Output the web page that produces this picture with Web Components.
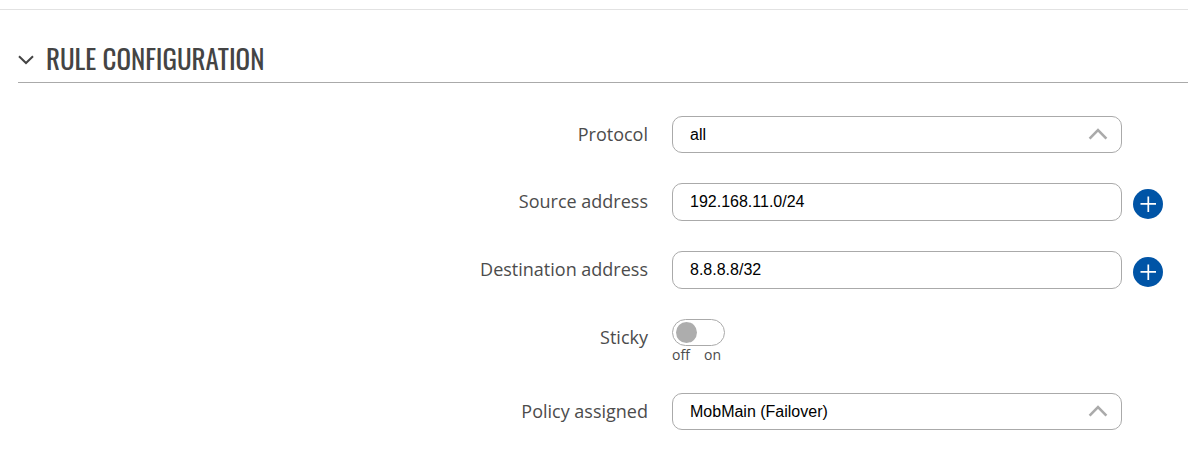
<!DOCTYPE html>
<html lang="en">
<head>
<meta charset="utf-8">
<meta name="viewport" content="width=device-width">
<title>Rule configuration</title>
<style>
  body { margin: 0; background: #fff; color: #4c4c4c; font-family: "Open Sans", sans-serif; font-size: 18px; }
</style>
</head>
<body>
<rule-page>
  <config-section heading="RULE CONFIGURATION">
    <select-field label="Protocol" value="all"></select-field>
    <text-field label="Source address" value="192.168.11.0/24"></text-field>
    <text-field label="Destination address" value="8.8.8.8/32"></text-field>
    <switch-field label="Sticky"></switch-field>
    <select-field label="Policy assigned" value="MobMain (Failover)"></select-field>
  </config-section>
</rule-page>
<script>
class RulePage extends HTMLElement {
  connectedCallback() {
    this.attachShadow({ mode: 'open' }).innerHTML = `
      <style>
        :host { display: block; padding-top: 9px; }
        main { border-top: 1px solid #e2e2e2; padding: 30px 0 32px 18px; }
      </style>
      <main><slot></slot></main>`;
  }
}

class ConfigSection extends HTMLElement {
  connectedCallback() {
    this.attachShadow({ mode: 'open' }).innerHTML = `
      <style>
        :host { display: block; }
        header { display: flex; align-items: center; gap: 12px; box-sizing: border-box; height: 43px; padding-bottom: 6px; border-bottom: 1px solid #aaa; }
        button { display: flex; padding: 4px 0 0; border: 0; background: none; color: #444; }
        h2 { margin: 0; color: #444; font: 400 27px/36px Oswald, "Liberation Sans Narrow", sans-serif; white-space: nowrap; }
        .rows { display: flex; flex-direction: column; gap: 30px; padding-top: 33px; }
      </style>
      <section>
        <header>
          <button type="button" aria-label="Collapse section" aria-expanded="true">
            <svg width="16" height="10" viewBox="0 0 16 10" fill="none" stroke="currentColor" stroke-width="2"><path d="M1 1.2 8 8 15 1.2"/></svg>
          </button>
          <h2></h2>
        </header>
        <div class="rows"><slot></slot></div>
      </section>`;
    this.shadowRoot.querySelector('h2').textContent = this.getAttribute('heading');
  }
}

class FormField extends HTMLElement {
  connectedCallback() {
    this.attachShadow({ mode: 'open' }).innerHTML = `
      <style>
        :host { display: grid; grid-template-columns: 105fr 86fr; column-gap: 24px; align-items: start; }
        .label { text-align: right; line-height: 36px; }
        .control { display: grid; grid-template-columns: 1fr 30px; column-gap: 11px; align-items: start; padding-right: 25px; }
        input[type=text], select {
          box-sizing: border-box; display: block; width: 100%; margin: 0; padding: 0 17px;
          border: 1px solid #aaa; border-radius: 10px; background: #fff; color: #000;
          font: 16px/20px "Liberation Sans", Arial, sans-serif;
        }
      </style>
      <label class="label" for="control"></label>
      <div class="control">${this.control()}</div>`;
    this.shadowRoot.querySelector('label').textContent = this.getAttribute('label');
    this.fill(this.shadowRoot.getElementById('control'));
  }
  fill() {}
}

class TextField extends FormField {
  control() {
    return `
      <style>
        input[type=text] { height: 38px; padding-bottom: 1px; }
        button { display: flex; margin-top: 6px; padding: 0; border: 0; border-radius: 50%; background: none; }
      </style>
      <input type="text" id="control">
      <button type="button" aria-label="Add">
        <svg width="30" height="30" viewBox="0 0 30 30"><circle cx="15" cy="15" r="15" fill="#0054a6"/><path d="M15.3 7.5v15.5M7.5 14.8h15.5" stroke="#fff" stroke-width="1.7"/></svg>
      </button>`;
  }
  fill(input) { input.value = this.getAttribute('value'); }
}

class SelectField extends FormField {
  control() {
    return `
      <style>
        .box { display: grid; align-items: center; }
        .box > * { grid-area: 1 / 1; }
        select { appearance: none; height: 37px; }
        svg { justify-self: end; margin-right: 14px; pointer-events: none; }
      </style>
      <div class="box">
        <select id="control"></select>
        <svg width="20" height="13" viewBox="0 0 20 13" fill="none" stroke="#aaa" stroke-width="2.6"><path d="M1.6 10.6 10 2.2l8.4 8.4"/></svg>
      </div>`;
  }
  fill(select) { select.add(new Option(this.getAttribute('value'))); }
}

class SwitchField extends FormField {
  control() {
    return `
      <style>
        .switch { width: 53px; }
        input {
          appearance: none; box-sizing: border-box; display: flex; align-items: center;
          width: 53px; height: 27px; margin: 0; padding: 0 3px; border: 1px solid #aaa; border-radius: 14px; background: #fff;
        }
        input::before { content: ""; width: 21px; height: 21px; border-radius: 50%; background: #adadad; }
        input:checked { justify-content: flex-end; }
        .states { display: flex; justify-content: space-between; padding-right: 4px; font-size: 14px; line-height: 17px; }
      </style>
      <div class="switch">
        <input type="checkbox" role="switch" id="control">
        <div class="states"><span>off</span><span>on</span></div>
      </div>`;
  }
}

customElements.define('rule-page', RulePage);
customElements.define('config-section', ConfigSection);
customElements.define('text-field', TextField);
customElements.define('select-field', SelectField);
customElements.define('switch-field', SwitchField);
</script>
</body>
</html>
